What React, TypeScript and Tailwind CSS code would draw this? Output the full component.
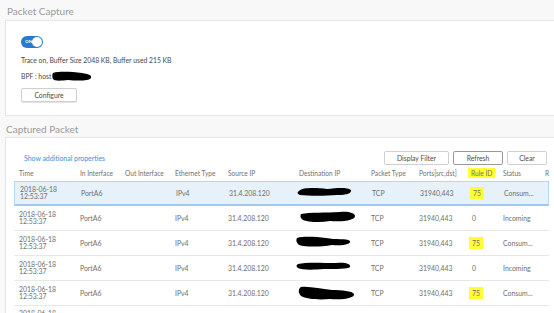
import React from "react";

const cols = "grid grid-cols-[61px_45px_50px_53px_71px_72px_48px_51px_33px_41px_60px]";

const blobs = [
  "M2 5 C6 1 20 2 30 3 C40 2 50 1 54 4 C55 7 50 9 40 9 C28 10 12 10 3 9 C0 8 0 6 2 5 Z",
  "M1 3 C10 1 25 2 40 1 C48 0 55 2 55 5 C55 9 45 11 30 10 C20 12 8 11 3 9 C0 7 0 5 1 3 Z",
  "M1 2 C8 0 20 1 30 2 C40 4 50 2 54 5 C55 8 48 10 36 9 C24 11 10 11 3 9 C0 6 0 4 1 2 Z",
  "M2 3 C10 1 26 2 40 2 C50 1 55 3 54 6 C52 8 40 8 28 8 C16 9 6 9 2 7 C0 6 0 4 2 3 Z",
  "M3 1 C12 0 22 3 34 4 C44 4 54 5 56 8 C57 12 46 14 32 13 C20 14 8 13 3 10 C0 7 0 3 3 1 Z",
];

function Blob({ d, w = 58, h = 15 }: { d: string; w?: number; h?: number }) {
  return (
    <svg width={w} height={h} viewBox={`0 0 ${w} ${h}`} className="block">
      <path d={d} fill="#000" />
    </svg>
  );
}

const rows = [
  { rule: "75", status: "Consum...", sel: true, blob: 0, off: "ml-[2px]" },
  { rule: "0", status: "Incoming", sel: false, blob: 1, off: "ml-[6px]" },
  { rule: "75", status: "Consum...", sel: false, blob: 2, off: "ml-[2px]" },
  { rule: "0", status: "Incoming", sel: false, blob: 3, off: "ml-[2px]" },
  { rule: "75", status: "Consum...", sel: false, blob: 4, off: "ml-[4px]" },
];

export default function App() {
  const font = { fontFamily: "Lato, 'Open Sans', sans-serif" };
  return (
    <div
      className="w-[554px] h-[313px] overflow-hidden bg-[#f8f8f8] text-[#555]"
      style={font}
    >
      <div className="h-[20px] pl-[7px] flex items-center text-[10px] text-[#9a9a9a] leading-none pt-[1px]">
        Packet Capture
      </div>
      <div className="ml-[5px] w-[560px] h-[96px] bg-white border border-[#e6e6e6] pl-[15px] pt-[15px]">
        <div className="relative w-[22px] h-[12px] rounded-full bg-[#2a79cc] flex items-center">
          <span className="text-[4.5px] text-white font-bold pl-[4px] leading-none">ON</span>
          <span className="absolute right-[1px] top-[1px] w-[10px] h-[10px] rounded-full bg-white"></span>
        </div>
        <div className="mt-[8px] text-[6.8px] leading-[9px] text-[#4a4a4a]">
          Trace on, Buffer Size 2048 KB, Buffer used 215 KB
        </div>
        <div className="mt-[6px] h-[10px] flex items-center text-[6.8px] text-[#4a4a4a]">
          <span>BPF : host</span>
          <span className="ml-[1px]">
            <svg width="40" height="11" viewBox="0 0 40 11" className="block">
              <path d="M1 2 C8 0 20 1 30 2 C36 3 40 4 39 7 C37 10 26 10 16 9 C8 10 2 10 1 8 C0 6 0 4 1 2 Z" fill="#000" />
            </svg>
          </span>
        </div>
        <button className="mt-[7px] w-[56px] h-[14px] bg-white border border-[#cfcfcf] rounded-[2px] text-[6.8px] text-[#4a4a4a] flex items-center justify-center shadow-[0_1px_0_#e5e5e5]">
          Configure
        </button>
      </div>
      <div className="h-[21px] pl-[6px] flex items-end pb-[3px] text-[10px] text-[#9a9a9a] leading-none">
        Captured Packet
      </div>
      <div className="ml-[5px] w-[560px] h-[200px] bg-white border border-[#e6e6e6] pt-[13px]">
        <div className="flex items-center h-[14px] pr-[17px]">
          <span className="ml-[18px] text-[6.9px] text-[#3d8fd8]">Show additional properties</span>
          <div className="ml-auto flex gap-[4px]">
            <button className="w-[65px] h-[14px] bg-white border border-[#cfcfcf] rounded-[2px] text-[6.8px] text-[#4a4a4a] flex items-center justify-center">
              Display Filter
            </button>
            <button className="w-[50px] h-[14px] bg-white border border-[#9a9a9a] rounded-[2px] text-[6.8px] text-[#4a4a4a] flex items-center justify-center">
              Refresh
            </button>
            <button className="w-[40px] h-[14px] bg-white border border-[#cfcfcf] rounded-[2px] text-[6.8px] text-[#4a4a4a] flex items-center justify-center">
              Clear
            </button>
          </div>
        </div>
        <div className="ml-[8px] w-[535px] overflow-hidden">
          <div className={`${cols} h-[16px] items-center text-[6.6px] text-[#707070] pt-[1px]`}>
            <span className="pl-[5px]">Time</span>
            <span className="pl-[5px]">In Interface</span>
            <span className="pl-[5px]">Out Interface</span>
            <span className="pl-[5px]">Ethernet Type</span>
            <span className="pl-[5px]">Source IP</span>
            <span className="pl-[5px]">Destination IP</span>
            <span className="pl-[5px]">Packet Type</span>
            <span className="pl-[5px]">Ports[src,dst]</span>
            <span className="pl-[3px]">
              <span className="bg-[#ffff33] px-[3px] py-[1px]">Rule ID</span>
            </span>
            <span className="pl-[5px]">Status</span>
            <span className="pl-[6px]">R</span>
          </div>
          {rows.map((r, i) => (
            <div
              key={i}
              className={
                r.sel
                  ? `${cols} h-[25px] items-center text-[6.9px] text-[#6e6e6e] bg-[#e6f1fa] border border-[#b7d6ef] border-b-2 border-b-[#9fc9ee]`
                  : `${cols} h-[25px] items-center text-[6.9px] text-[#6e6e6e] border-b border-[#e8e8e8]`
              }
            >
              <span className="pl-[5px] leading-[7px]">
                2018-06-18
                <br />
                12:53:37
              </span>
              <span className="pl-[5px]">PortA6</span>
              <span className="pl-[5px]"></span>
              <span className="pl-[5px]">IPv4</span>
              <span className="pl-[5px]">31.4.208.120</span>
              <span className={r.off}>
                <Blob d={blobs[r.blob]} />
              </span>
              <span className="pl-[5px]">TCP</span>
              <span className="pl-[5px]">31940,443</span>
              <span className="pl-[4px]">
                {r.rule === "75" ? (
                  <span className="bg-[#ffff33] px-[3px] py-[2px]">75</span>
                ) : (
                  <span className="pl-[3px]">0</span>
                )}
              </span>
              <span className="pl-[5px]">{r.status}</span>
              <span></span>
            </div>
          ))}
          <div className={`${cols} h-[25px] items-start pt-[4px] text-[6.9px] text-[#6e6e6e]`}>
            <span className="pl-[5px] leading-[7px]">2018-06-18</span>
          </div>
        </div>
      </div>
    </div>
  );
}
